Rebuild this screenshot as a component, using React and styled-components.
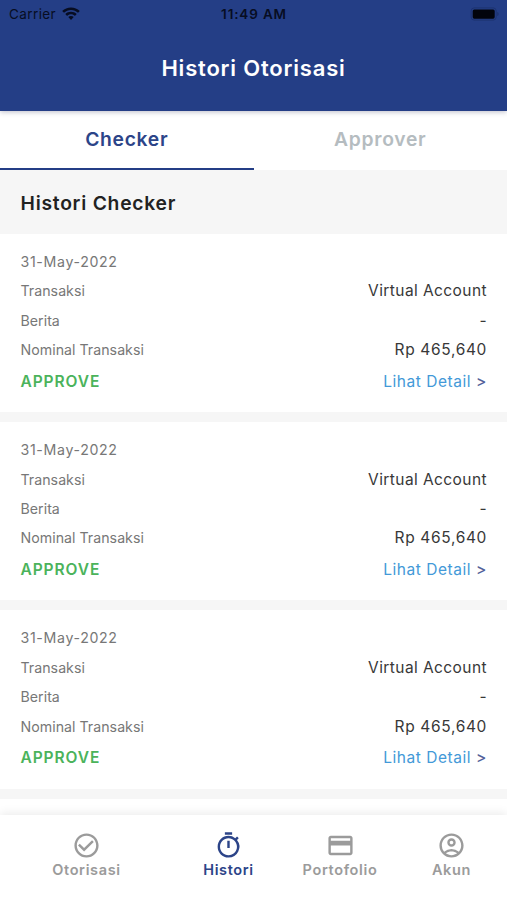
import React, { useState } from "react";
import styled, { createGlobalStyle } from "styled-components";
import {
  MdCheckCircleOutline,
  MdOutlineTimer,
  MdOutlineCreditCard,
  MdOutlineAccountCircle,
} from "react-icons/md";

const GlobalStyle = createGlobalStyle`
  * {
    box-sizing: border-box;
  }
  body {
    margin: 0;
    background: #fff;
    font-family: "Inter", "Liberation Sans", sans-serif;
  }
  button {
    border: 0;
    padding: 0;
    background: none;
    font-family: inherit;
  }
`;

const Screen = styled.div`
  width: 100%;
  height: 100vh;
  overflow: hidden;
  display: flex;
  flex-direction: column;
`;

const Header = styled.header`
  position: relative;
  z-index: 2;
  flex: none;
  height: 110.5px;
  background: #243e86;
  box-shadow: 0 1px 5px rgba(36, 40, 80, 0.3);
`;

const StatusBar = styled.div`
  height: 27px;
  padding: 0 8px 0 9px;
  display: grid;
  grid-template-columns: 1fr auto 1fr;
  align-items: center;
  color: #070d22;
  font-size: 13.5px;
`;

const Carrier = styled.div`
  display: flex;
  align-items: center;
  gap: 6px;
  letter-spacing: 0.4px;
`;

const Clock = styled.div`
  font-weight: 600;
  letter-spacing: 0.85px;
`;

const Battery = styled.svg`
  justify-self: end;
`;

const Title = styled.h1`
  margin: 0;
  height: 82px;
  display: flex;
  align-items: center;
  justify-content: center;
  color: #fff;
  font-size: 22px;
  font-weight: 600;
  letter-spacing: 0.8px;
`;

const Tabs = styled.div`
  flex: none;
  height: 59px;
  display: flex;
  background: #fff;
`;

const Tab = styled.button`
  flex: 1;
  border-bottom: 2.5px solid ${({ $active }) => ($active ? "#243e86" : "#fff")};
  color: ${({ $active }) => ($active ? "#2c4488" : "#b5bcc0")};
  font-size: 19.3px;
  font-weight: 600;
  letter-spacing: 0.7px;
`;

const List = styled.main`
  flex: 1;
  min-height: 0;
  overflow: hidden;
  background: #f6f6f6;
`;

const Heading = styled.h2`
  margin: 0;
  height: 64.5px;
  padding: 2px 20px 0 20.5px;
  display: flex;
  align-items: center;
  color: #222;
  font-size: 19.3px;
  font-weight: 600;
  letter-spacing: 0.75px;
`;

const Card = styled.article`
  height: 178.2px;
  margin-bottom: 10px;
  padding: 12.9px 20px 0 20.5px;
  background: #fff;
`;

const Row = styled.div`
  height: ${({ $last }) => ($last ? "34px" : "29.4px")};
  display: flex;
  align-items: center;
  justify-content: space-between;
`;

const Label = styled.span`
  color: #777;
  font-size: 14.2px;
  letter-spacing: ${({ $date }) => ($date ? "0.65px" : "0.02px")};
`;

const Value = styled.span`
  color: #383838;
  font-size: 15.5px;
  letter-spacing: ${({ $amount }) => ($amount ? "0.65px" : "0.42px")};
`;

const Status = styled.span`
  color: #4bb35b;
  font-size: 15.5px;
  font-weight: 600;
  letter-spacing: 0.9px;
`;

const Detail = styled.button`
  color: #4399d8;
  font-size: 15.5px;
  letter-spacing: 0.55px;
  span {
    color: #53629a;
    font-weight: 500;
  }
`;

const BottomNav = styled.nav`
  position: relative;
  z-index: 2;
  flex: none;
  height: 85px;
  padding-top: 16px;
  display: grid;
  grid-template-columns: 173px 111px 112px 111px;
  align-items: start;
  background: #fff;
  box-shadow: 0 -2px 9px rgba(0, 0, 0, 0.08);
`;

const NavItem = styled.button`
  display: flex;
  flex-direction: column;
  align-items: center;
  color: ${({ $active }) => ($active ? "#2c4488" : "#9b9b9b")};
  font-size: 14.5px;
  line-height: 19px;
  font-weight: 600;
  letter-spacing: 0.65px;
  svg {
    width: 29px;
    height: 29px;
  }
`;

const transactions = [
  { id: 1, date: "31-May-2022", type: "Virtual Account", note: "-", amount: "Rp 465,640" },
  { id: 2, date: "31-May-2022", type: "Virtual Account", note: "-", amount: "Rp 465,640" },
  { id: 3, date: "31-May-2022", type: "Virtual Account", note: "-", amount: "Rp 465,640" },
];

const menu = [
  { name: "Otorisasi", icon: MdCheckCircleOutline },
  { name: "Histori", icon: MdOutlineTimer },
  { name: "Portofolio", icon: MdOutlineCreditCard },
  { name: "Akun", icon: MdOutlineAccountCircle },
];

const WifiIcon = () => (
  <svg width="18" height="14" viewBox="0 0 18 14" fill="currentColor">
    <path d="M9 0.4C5.6 0.4 2.5 1.7 0.2 3.9L2 5.8C3.8 4.1 6.3 3 9 3s5.2 1.1 7 2.8l1.8-1.9C15.5 1.7 12.4 0.4 9 0.4z" />
    <path d="M9 4.7c-2.2 0-4.2.9-5.7 2.3l1.8 1.9C6.1 7.9 7.5 7.3 9 7.3s2.9.6 3.9 1.6l1.8-1.9C13.2 5.6 11.2 4.7 9 4.7z" />
    <path d="M9 9c-1.1 0-2 .4-2.7 1.1L9 13l2.7-2.9C11 9.4 10.1 9 9 9z" />
  </svg>
);

const BatteryIcon = () => (
  <Battery width="29" height="14" viewBox="0 0 29 14">
    <rect x="1.2" y="0.9" width="25" height="12.2" rx="3" fill="none" stroke="#1d3370" />
    <rect x="2.7" y="2.5" width="22" height="9.2" rx="1.6" fill="#02040c" />
    <path d="M27.2 5v4c.9-.4 1.5-1.1 1.5-2s-.6-1.6-1.5-2z" fill="#1d3370" />
  </Battery>
);

const TransactionCard = ({ item }) => (
  <Card>
    <Row>
      <Label $date>{item.date}</Label>
    </Row>
    <Row>
      <Label>Transaksi</Label>
      <Value>{item.type}</Value>
    </Row>
    <Row>
      <Label>Berita</Label>
      <Value>{item.note}</Value>
    </Row>
    <Row>
      <Label>Nominal Transaksi</Label>
      <Value $amount>{item.amount}</Value>
    </Row>
    <Row $last>
      <Status>APPROVE</Status>
      <Detail>
        Lihat Detail <span>&gt;</span>
      </Detail>
    </Row>
  </Card>
);

const App = () => {
  const [tab, setTab] = useState("Checker");
  const [page, setPage] = useState("Histori");

  return (
    <>
      <GlobalStyle />
      <Screen>
        <Header>
          <StatusBar>
            <Carrier>
              Carrier <WifiIcon />
            </Carrier>
            <Clock>11:49 AM</Clock>
            <BatteryIcon />
          </StatusBar>
          <Title>Histori Otorisasi</Title>
        </Header>
        <Tabs>
          {["Checker", "Approver"].map((name) => (
            <Tab key={name} $active={tab === name} onClick={() => setTab(name)}>
              {name}
            </Tab>
          ))}
        </Tabs>
        <List>
          <Heading>Histori {tab}</Heading>
          {transactions.map((item) => (
            <TransactionCard key={item.id} item={item} />
          ))}
          {/* next card starts right above the bottom nav */}
          <Card />
        </List>
        <BottomNav>
          {menu.map(({ name, icon: Icon }) => (
            <NavItem key={name} $active={page === name} onClick={() => setPage(name)}>
              <Icon />
              {name}
            </NavItem>
          ))}
        </BottomNav>
      </Screen>
    </>
  );
};

export default App;
